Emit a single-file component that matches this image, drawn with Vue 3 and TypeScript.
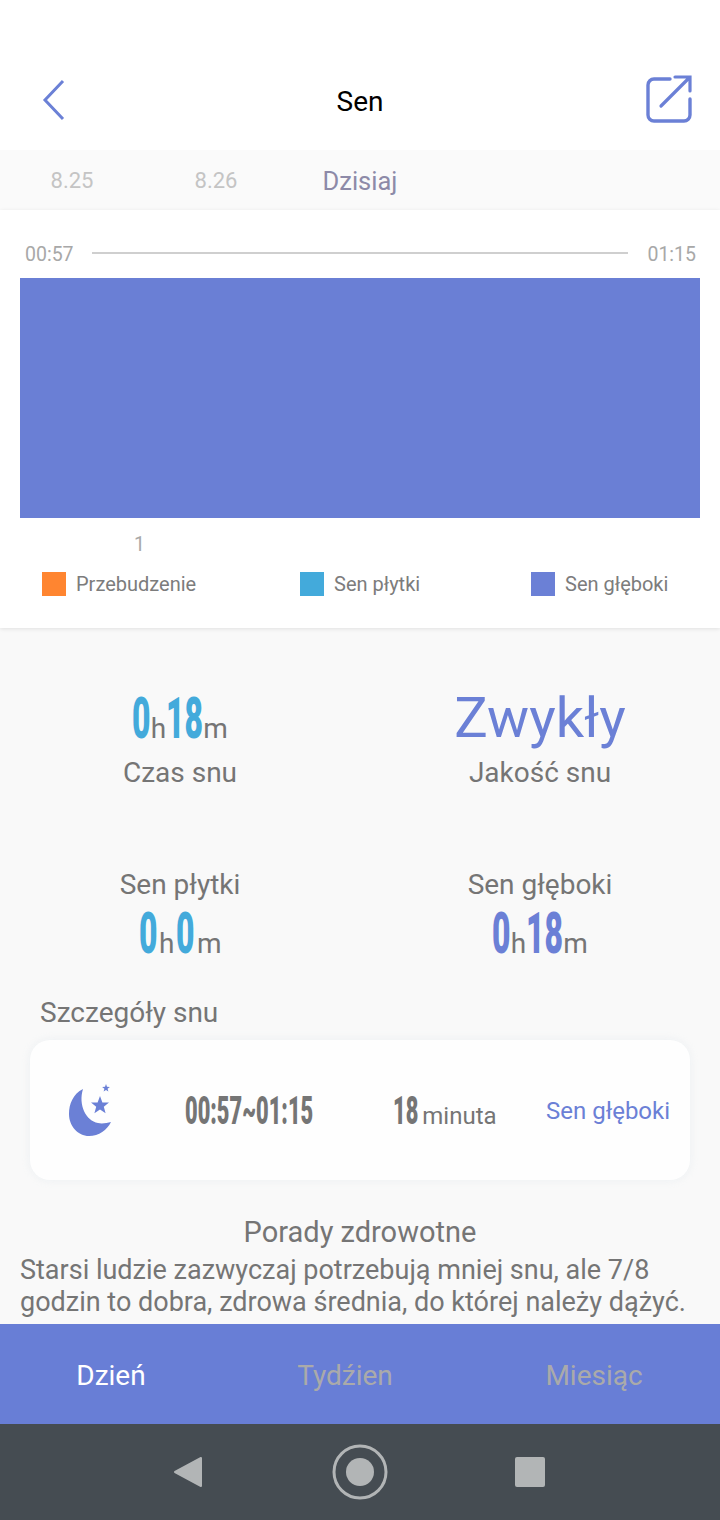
<script setup lang="ts">
const dates = [
  { label: '8.25', active: false },
  { label: '8.26', active: false },
  { label: 'Dzisiaj', active: true },
];

const legend = [
  { label: 'Przebudzenie', color: '#ff8530', width: 258 },
  { label: 'Sen płytki', color: '#43aadb', width: 231 },
  { label: 'Sen głęboki', color: '#6b80d6', width: 189 },
];

const tabs = [
  { label: 'Dzień', active: true },
  { label: 'Tydźien', active: false },
  { label: 'Miesiąc', active: false },
];
</script>

<template>
  <div class="page">
    <header class="top">
      <svg class="back" width="28" height="44" viewBox="0 0 28 44">
        <path d="M23 3 5 22l18 19" fill="none" stroke="#6b80d6" stroke-width="3" />
      </svg>
      <span class="title">Sen</span>
      <svg class="share" width="48" height="50" viewBox="0 0 48 50">
        <path d="M25 5H9a6 6 0 0 0-6 6v30a6 6 0 0 0 6 6h30a6 6 0 0 0 6-6V25" fill="none" stroke="#6b80d6" stroke-width="3.4" stroke-linecap="round" />
        <path d="M16 32 44 4M30 3h15v14" fill="none" stroke="#6b80d6" stroke-width="3.2" stroke-linecap="round" />
      </svg>
    </header>

    <nav class="dates">
      <span v-for="d in dates" :key="d.label" :class="['date', { on: d.active }]">{{ d.label }}</span>
    </nav>

    <section class="chart">
      <div class="range">
        <span>00:57</span>
        <i class="rule"></i>
        <span>01:15</span>
      </div>
      <div class="bar"></div>
      <div class="tick">1</div>
      <div class="legend">
        <div v-for="l in legend" :key="l.label" class="legend-item" :style="{ width: l.width + 'px' }">
          <i class="swatch" :style="{ background: l.color }"></i>
          <span>{{ l.label }}</span>
        </div>
      </div>
    </section>

    <main class="body">
      <div class="stats">
        <div class="stat">
          <div class="value blue"><b class="d1"><span>0</span></b><small>h</small><b class="d2"><span>18</span></b><small>m</small></div>
          <div class="label">Czas snu</div>
        </div>
        <div class="stat">
          <div class="quality">Zwykły</div>
          <div class="label">Jakość snu</div>
        </div>
        <div class="stat">
          <div class="label">Sen płytki</div>
          <div class="value blue low spaced"><b class="d1"><span>0</span></b><small>h</small><b class="d1"><span>0</span></b><small>m</small></div>
        </div>
        <div class="stat">
          <div class="label">Sen głęboki</div>
          <div class="value indigo low"><b class="d1"><span>0</span></b><small>h</small><b class="d2"><span>18</span></b><small>m</small></div>
        </div>
      </div>

      <h2 class="details">Szczegóły snu</h2>
      <div class="card">
        <svg class="moon" width="46" height="56" viewBox="0 0 46 56">
          <path d="M15 6C5 11 1 21 1 31c0 12 9 22 20 22 10 0 18-6 22-14-4 1-9 2-13 1C18 38 10 22 15 6Z" fill="#6b80d6" />
          <path d="m32 13 2.4 6.4 6.6.2-5.2 4.100 1.800 6.500-5.600-3.800-5.600 3.800 1.800-6.500-5.200-4.100 6.600-.2Z" fill="#6b80d6" />
          <path d="m38 1 1 2.800 2.900.1-2.300 1.800.8 2.800-2.400-1.600-2.400 1.600.8-2.800-2.300-1.800 2.900-.1Z" fill="#6b80d6" />
        </svg>
        <span class="span"><b><span>00:57~01:15</span></b></span>
        <span class="mins"><b><span>18</span></b> minuta</span>
        <span class="kind">Sen głęboki</span>
      </div>

      <h2 class="tips-title">Porady zdrowotne</h2>
      <p class="tips">Starsi ludzie zazwyczaj potrzebują mniej snu, ale 7/8 godzin to dobra, zdrowa średnia, do której należy dążyć.</p>
    </main>

    <div class="tabs">
      <span v-for="t in tabs" :key="t.label" :class="['tab', { on: t.active }]">{{ t.label }}</span>
    </div>

    <div class="sysbar">
      <svg width="32" height="34" viewBox="0 0 32 34">
        <path d="M29 3v28L3 17Z" fill="#b2b5b6" stroke="#b2b5b6" stroke-width="2" stroke-linejoin="round" />
      </svg>
      <svg width="56" height="56" viewBox="0 0 56 56">
        <circle cx="28" cy="28" r="26" fill="none" stroke="#b2b5b6" stroke-width="3" />
        <circle cx="28" cy="28" r="14" fill="#b2b5b6" />
      </svg>
      <i class="stop"></i>
    </div>
  </div>
</template>

<style scoped>
.page {
  width: 720px;
  height: 1520px;
  display: flex;
  flex-direction: column;
  overflow: hidden;
  background: #f9f9f9;
  font-family: Roboto, "Liberation Sans", sans-serif;
  color: #757575;
}

.top {
  height: 150px;
  box-sizing: border-box;
  padding: 76px 27px 0 40px;
  background: #fff;
  display: flex;
  align-items: flex-start;
  justify-content: space-between;
  position: relative;
}

.back {
  margin-top: 2px;
}

.share {
  margin-top: -2px;
}

.title {
  position: absolute;
  left: 0;
  right: 0;
  top: 85px;
  text-align: center;
  font-size: 28px;
  line-height: 34px;
  color: #000;
}

.dates {
  height: 60px;
  box-sizing: border-box;
  padding-top: 1px;
  display: grid;
  grid-template-columns: repeat(5, 144px);
  align-items: center;
  text-align: center;
  background: #fafafa;
  font-size: 22px;
  font-weight: 400;
  color: #c4c4c4;
}

.date.on {
  font-size: 25.500px;
  color: #8d8aa8;
}

.chart {
  height: 418px;
  box-sizing: border-box;
  background: #fff;
  padding-top: 32px;
  box-shadow: 0 1px 4px rgba(0, 0, 0, 0.1);
  position: relative;
}

.range {
  height: 24px;
  padding: 1px 24px 0 25px;
  box-sizing: border-box;
  display: flex;
  align-items: center;
  justify-content: space-between;
  font-size: 19.500px;
  color: #a8a8a8;
}

.rule {
  width: 536px;
  height: 2px;
  background: #cfcfcf;
  margin: -3px 2px 0 0;
}

.bar {
  height: 240px;
  margin: 12px 20px 0;
  background: #6a7fd5;
}

.tick {
  margin: 16px 0 0 134px;
  font-size: 19.500px;
  line-height: 22px;
  color: #a8a8a8;
}

.legend {
  display: flex;
  margin: 16px 0 0 42px;
}

.legend-item {
  display: flex;
  align-items: center;
  gap: 10px;
  font-size: 20px;
  line-height: 24px;
  color: #7c7c7c;
}

.swatch {
  width: 24px;
  height: 24px;
}

.body {
  flex: 1;
  min-height: 0;
}

.stats {
  display: grid;
  grid-template-columns: 360px 360px;
  padding-top: 62px;
}

.stat {
  text-align: center;
  height: 178px;
}

.stat:nth-child(n + 3) {
  height: 128px;
}

.label {
  font-size: 28px;
  line-height: 34px;
  color: #757575;
}

.value {
  height: 66px;
  line-height: 66px;
  white-space: nowrap;
  font-size: 28px;
}

.value.low {
  padding-top: 3px;
}

.value small {
  font-size: 28px;
  color: #757575;
}

/* no condensed face installed: squeeze bold digits, 1ch = one digit advance */
.value b {
  display: inline-block;
  font-size: 57px;
  line-height: 1;
  font-weight: 900;
  text-align: left;
}

.spaced b,
.spaced small:first-of-type {
  margin-right: 2px;
}

.value b span,
.card b span {
  display: inline-block;
  transform: scaleX(0.56);
  transform-origin: 0 50%;
}

.d1 {
  width: 0.56ch;
}

.d2 {
  width: 1.12ch;
}

.blue b {
  color: #43aadb;
}

.indigo b {
  color: #6b80d6;
}

.quality {
  height: 66px;
  line-height: 57px;
  font-size: 56px;
  color: #6b80d6;
}

.details {
  margin: 0;
  padding: 0 0 0 40px;
  font-size: 28px;
  line-height: 34px;
  font-weight: 400;
  color: #757575;
}

.card {
  height: 140px;
  box-sizing: border-box;
  margin: 10px 30px 0;
  padding: 2px 0 0 38px;
  background: #fefefe;
  border-radius: 20px;
  box-shadow: 0 0 8px rgba(220, 228, 235, 0.45);
  display: flex;
  align-items: center;
}

.span {
  margin-left: 71px;
  width: 208px;
  white-space: nowrap;
}

.card b {
  display: inline-block;
  font-size: 39px;
  font-weight: 900;
  line-height: 1;
  color: #757575;
}

.span b {
  width: 128px;
}

.mins b {
  width: 1.12ch;
  margin-right: -2px;
}

.mins {
  width: 153px;
  font-size: 24px;
  white-space: nowrap;
}

.kind {
  font-size: 24px;
  white-space: nowrap;
  color: #6b80d6;
}

.tips-title {
  margin: 35px 0 0;
  text-align: center;
  font-size: 29px;
  line-height: 34px;
  font-weight: 400;
  color: #757575;
}

.tips {
  margin: 5px 0 0;
  padding: 0 20px;
  font-size: 27px;
  line-height: 32px;
  color: #757575;
}

.tabs {
  height: 100px;
  flex: none;
  display: flex;
  background: #687ed6;
  font-size: 28px;
}

.tab {
  flex: 1;
  display: flex;
  align-items: center;
  justify-content: center;
  color: #aaa;
  padding-top: 3px;
}

.tab:first-child {
  flex: none;
  width: 222px;
}

.tab:nth-child(2) {
  flex: none;
  width: 246px;
}

.tab.on {
  color: #fff;
}

.sysbar {
  height: 96px;
  flex: none;
  box-sizing: border-box;
  padding-left: 172px;
  background: #454c52;
  display: flex;
  align-items: center;
}

.sysbar svg:first-child {
  margin-right: 128px;
}

.stop {
  width: 30px;
  height: 30px;
  border-radius: 2px;
  background: #b2b5b6;
  margin-left: 127px;
}
</style>
